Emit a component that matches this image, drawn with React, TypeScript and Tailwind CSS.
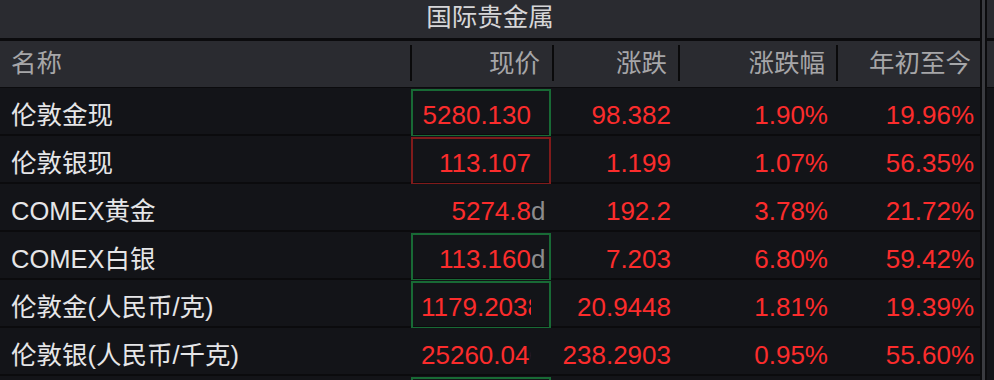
import React from "react";

type Row = {
  name: string;
  price: string;
  flag?: string;
  chg: string;
  pct: string;
  ytd: string;
  box: "green" | "red" | "none";
};

const rows: Row[] = [
  { name: "伦敦金现", price: "5280.130", chg: "98.382", pct: "1.90%", ytd: "19.96%", box: "green" },
  { name: "伦敦银现", price: "113.107", chg: "1.199", pct: "1.07%", ytd: "56.35%", box: "red" },
  { name: "COMEX黄金", price: "5274.8", flag: "d", chg: "192.2", pct: "3.78%", ytd: "21.72%", box: "none" },
  { name: "COMEX白银", price: "113.160", flag: "d", chg: "7.203", pct: "6.80%", ytd: "59.42%", box: "green" },
  { name: "伦敦金(人民币/克)", price: "1179.2038", chg: "20.9448", pct: "1.81%", ytd: "19.39%", box: "green" },
  { name: "伦敦银(人民币/千克)", price: "25260.046", chg: "238.2903", pct: "0.95%", ytd: "55.60%", box: "none" },
  { name: "伦敦铂金", price: "2653.500", chg: "41.200", pct: "1.58%", ytd: "28.14%", box: "green" },
];

const boxClass = {
  green: "border-[#186a35]",
  red: "border-[#801b1b]",
  none: "border-transparent",
};

const cols = "grid grid-cols-[410px_142px_126px_158px_144px]";

function HeadCell({ label, pr, first }: { label: string; pr: string; first?: boolean }) {
  return (
    <div className="flex items-center">
      <div
        className={`flex h-[36px] w-full items-center ${
          first ? "justify-start pl-[11px]" : `justify-end border-l-2 border-[#0a0a0b] ${pr}`
        }`}
      >
        {label}
      </div>
    </div>
  );
}

export default function App() {
  return (
    <div
      className="flex h-[380px] w-[994px] overflow-hidden bg-[#0b0b0d]"
      style={{ fontFamily: '"Liberation Sans", "Noto Sans CJK SC", sans-serif' }}
    >
      <div className="flex w-[980px] shrink-0 flex-col">
        {/* title */}
        <div className="flex h-[38px] shrink-0 items-center justify-center bg-[#2a2b30] pb-[3px] text-[25.5px] text-[#d6d6d8]">
          国际贵金属
        </div>

        {/* header */}
        <div className={`${cols} mt-[3px] h-[46px] shrink-0 bg-[#2a2b30] pb-[2px] text-[25.5px] text-[#a6a6a8]`}>
          <HeadCell label="名称" pr="" first />
          <HeadCell label="现价" pr="pr-[12px]" />
          <HeadCell label="涨跌" pr="pr-[11px]" />
          <HeadCell label="涨跌幅" pr="pr-[11px]" />
          <HeadCell label="年初至今" pr="pr-[9px]" />
        </div>

        {/* rows */}
        <div className="mt-[1px] flex shrink-0 flex-col gap-[2px]">
          {rows.map((r) => (
            <div key={r.name} className={`${cols} h-[46px] shrink-0 bg-[#131418] text-[#fb2c2c]`}>
              <div className="flex items-center pl-[11px] pt-[6px] text-[25.5px] text-[#e6e6e8]">
                {r.name}
              </div>
              <div className="pl-[1px] pr-[1px] pt-[1px]">
                <div className={`flex h-full items-center border-2 ${boxClass[r.box]} pl-[8px] pt-[5px] text-[26px]`}>
                  <span className="w-[110px] overflow-hidden whitespace-nowrap text-right">{r.price}</span>
                  <span className="w-[14px] text-[#8c8c8e]">{r.flag}</span>
                </div>
              </div>
              <div className="flex items-center justify-end pr-[7px] pt-[6px] text-[26px]">{r.chg}</div>
              <div className="flex items-center justify-end pr-[8px] pt-[6px] text-[26px]">{r.pct}</div>
              <div className="flex items-center justify-end pr-[6px] pt-[6px] text-[26px]">{r.ytd}</div>
            </div>
          ))}
        </div>
      </div>

      {/* scroll track */}
      <div className="ml-[2px] w-[3px] shrink-0 bg-[#3a3b40]" />

      {/* neighbouring panel edge */}
      <div className="ml-[2px] flex flex-1 flex-col">
        <div className="h-[38px] shrink-0 bg-[#2a2b30]" />
        <div className="mt-[3px] h-[46px] shrink-0 bg-[#2a2b30]" />
        <div className="mt-[1px] flex-1 bg-[#131418]" />
      </div>
    </div>
  );
}
